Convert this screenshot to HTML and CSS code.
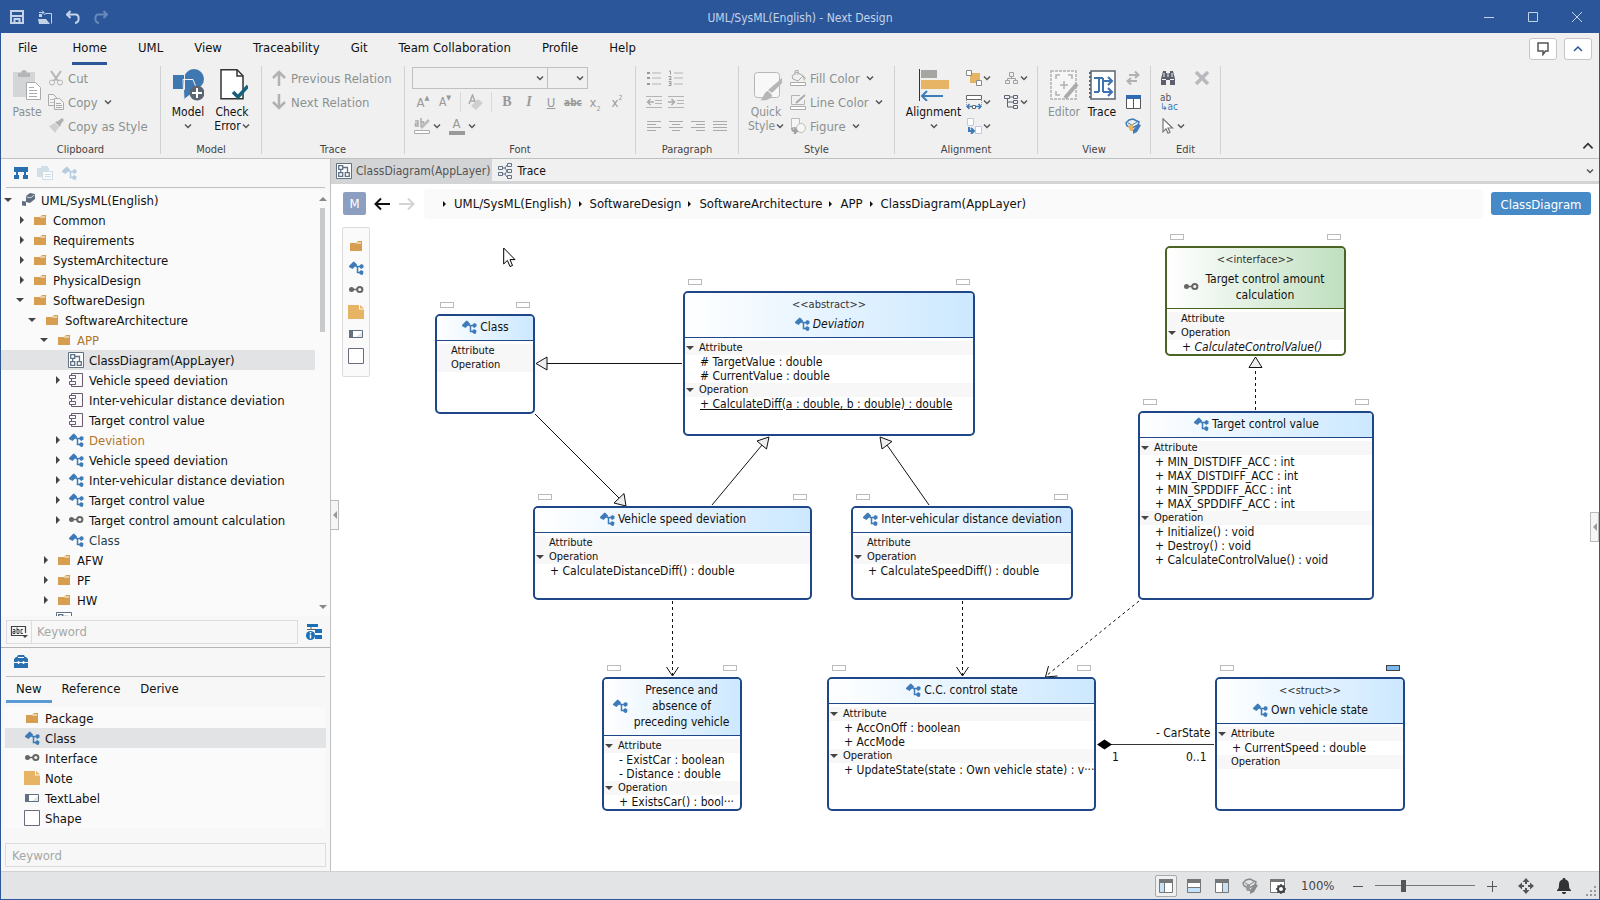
FILE: index.html
```html
<!DOCTYPE html>
<html lang="en">
<head>
    <meta charset="UTF-8">
    <meta name="viewport" content="width=device-width, initial-scale=1.0">
    <title>UML/SysML(English) - Next Design</title>
    <link rel="stylesheet" href="styles.css">
</head>
<body>
    <!-- Shared icons -->
    <svg class="sprite" aria-hidden="true">
        <symbol id="i-folder" viewBox="0 0 16 16"><path fill="#d79e4f" d="M2 5h6l2-2h4v10H2z"/><path fill="#fff" d="M9 4.500h4v1H8z"/></symbol>
        <symbol id="i-class" viewBox="0 0 16 16"><path fill="#3d7cb8" d="M1 6l4-4 1-.5 3 3-.5 2-2 .5-2 2L1 7z"/><path fill="none" stroke="#3d7cb8" stroke-width="1.500" d="M8 6.500h4M9.500 6.500v6h3"/><path fill="#3d7cb8" d="M11 6.500l2-2.500 2.500 1v2.500L13 9zM10.500 12.500L13 10l2.500 1.500-.5 3-2 .5z"/></symbol>
        <symbol id="i-interface" viewBox="0 0 16 16"><circle cx="3.500" cy="7.500" r="2.500" fill="#666"/><path stroke="#666" stroke-width="1.500" d="M4 7.500h5"/><circle cx="11.800" cy="7.500" r="2.600" fill="none" stroke="#666" stroke-width="2"/></symbol>
        <symbol id="i-note" viewBox="0 0 16 16"><path fill="#e7b365" d="M0 1h11v4.500h5V15H0z"/><path fill="#e7b365" d="M12 1l4 3.500h-4z"/></symbol>
        <symbol id="i-label" viewBox="0 0 16 16"><path fill="#fff" stroke="#5f7183" d="M1.500 4.500h13v7h-13z"/><path fill="#5f7183" d="M1 4h4v8H1z"/><path fill="#e4e4e4" d="M14 6v5H8z"/></symbol>
        <symbol id="i-shape" viewBox="0 0 16 16"><path fill="#fff" stroke="#6a6b7c" d="M.5.5h15v15H.5z"/></symbol>
        <symbol id="i-diagram" viewBox="0 0 16 16"><path fill="#fff" stroke="#5f7183" d="M.5.5h15v15H.5z"/><path fill="none" stroke="#5f7183" stroke-width="1.300" d="M2.700 2.700h4v3.600h-4zM2.700 9.700h4v3.600h-4zM9.300 9.700h4v3.600h-4zM7 4.500h4.500v5M4.700 6.500v3"/></symbol>
        <symbol id="i-component" viewBox="0 0 16 16"><path fill="none" stroke="#6a5a70" d="M3.500 4V1.500h11v13h-11V12M3.500 7v2M1.500 3.500h6v3h-6zM1.500 9.500h6v3h-6z"/></symbol>
        <symbol id="i-project" viewBox="0 0 16 16"><path fill="#5f6f80" d="M6 4l4-3 5 1v5l-5 4-4-1z"/><path fill="#fafafa" d="M6.500 4.500l4 1 4-3v.8l-4 3-4-1z"/><path fill="#5f6f80" d="M2 9l4 .5V14l-4-.5z"/></symbol>
        <symbol id="i-down" viewBox="0 0 8 8"><path d="M1 2.500L4 5.500l3-3" fill="none" stroke="currentColor" stroke-width="1.500"/></symbol>
        <symbol id="i-cube" viewBox="0 0 16 16"><path fill="none" stroke="currentColor" stroke-width="1.500" d="M1 5l3-3 4-1 6 3-1 3-6 3-5-2z"/><path fill="none" stroke="currentColor" d="M3 5l4 2 5-3"/><path fill="var(--drop)" d="M3 8l5-2v7H5z"/><path fill="currentColor" d="M8 12l5-6 3 1-4 7-4 2z"/></symbol>
        <symbol id="i-tree" viewBox="0 0 16 16"><path fill="#2a6fb0" d="M1 2h14v5H1z"/><path stroke="#2a6fb0" stroke-width="2" d="M4 7v3M12 7v3"/><path fill="#2a6fb0" d="M1 10h5v4H1zM10 10h5v4h-5z"/></symbol>
    </svg>

    <div class="app">
        <header class="titlebar">
            <div class="quick">
                <button aria-label="Save"><svg viewBox="0 0 14 14"><path fill="none" stroke="currentColor" stroke-width="2" d="M1 1h12v12H1zM1 6h12M4.500 13v-4h5v4"/></svg></button>
                <button aria-label="Open"><svg viewBox="0 0 14 14"><path fill="none" stroke="currentColor" d="M1 2.500h5M4 .5l2 2-2 2M6 4.500l2-1h5.500v10"/><path fill="currentColor" d="M0 9h8l4 5H1zM1 4h3v3H1z"/></svg></button>
                <button aria-label="Undo"><svg viewBox="0 0 14 14"><path fill="none" stroke="currentColor" stroke-width="2" d="M4.500 1L1 4.500 4.500 8M1 4.500h8.500c4 0 4.500 8-.5 8.500"/></svg></button>
                <button aria-label="Redo" class="dim"><svg viewBox="0 0 14 14"><path fill="none" stroke="currentColor" stroke-width="2" d="M9.500 1L13 4.500 9.500 8M13 4.500H4.500c-4 0-4.500 8 .5 8.500"/></svg></button>
            </div>
            <div class="app-title">UML/SysML(English) - Next Design</div>
            <div class="window-buttons">
                <button aria-label="Minimize"><svg viewBox="0 0 12 12"><path stroke="currentColor" d="M1 6.500h10"/></svg></button>
                <button aria-label="Maximize"><svg viewBox="0 0 12 12"><path fill="none" stroke="currentColor" d="M1.500 1.500h9v9h-9z"/></svg></button>
                <button aria-label="Close"><svg viewBox="0 0 12 12"><path stroke="currentColor" d="M1 1l10 10M11 1L1 11"/></svg></button>
            </div>
        </header>

        <nav class="menu">
            <a href="#" class="file">File</a>
            <a href="#" class="active">Home</a>
            <a href="#">UML</a>
            <a href="#">View</a>
            <a href="#">Traceability</a>
            <a href="#">Git</a>
            <a href="#">Team Collaboration</a>
            <a href="#">Profile</a>
            <a href="#">Help</a>
            <div class="menu-right">
                <button aria-label="Feedback"><svg viewBox="0 0 14 14"><path fill="none" stroke="#555" stroke-width="1.500" d="M2 1h10v8H9.500L7 12.500V9H2z"/></svg></button>
                <button aria-label="Collapse"><svg viewBox="0 0 14 14"><path fill="none" stroke="#2b579a" stroke-width="1.500" d="M3 9l4-4 4 4"/></svg></button>
            </div>
        </nav>

        <section class="ribbon">
            <div class="group g-clipboard">
                <div class="group-body">
                    <button class="big off">
                        <svg viewBox="0 0 32 32"><path fill="#d3d5d7" d="M2 3h22v25H2z"/><path fill="#b4b6b8" d="M7 4h3c0-4 6-4 6 0h3v4H7z"/><path fill="#fff" stroke="#a9abad" d="M15.500 13.500h9l5 5v12h-14z"/><path stroke="#a9abad" d="M18 18.500h5M18 21.500h8M18 24.500h8M18 27.500h8"/></svg>
                        <span>Paste</span>
                    </button>
                    <div class="stack">
                        <button class="row off"><svg viewBox="0 0 16 16"><path fill="none" stroke="#b4b4b4" stroke-width="2" d="M3 1l7 10M13 1L6 11"/><circle cx="4" cy="12.500" r="2.500" fill="none" stroke="#b4b4b4"/><circle cx="12" cy="12.500" r="2.500" fill="none" stroke="#b4b4b4"/></svg>Cut</button>
                        <button class="row off"><svg viewBox="0 0 16 16"><path fill="#f5f5f5" stroke="#aaa" d="M.5.5h5l3 3v8h-8z"/><path stroke="#bbb" d="M2 5.500h4M2 8.500h4"/><path fill="#f5f5f5" stroke="#aaa" d="M6.500 4.500h5l4 4v7h-9z"/><path stroke="#aaa" d="M8 9.500h5M8 11.500h6M8 13.500h6"/></svg>Copy<svg class="caret"><use href="#i-down"/></svg></button>
                        <button class="row off"><svg viewBox="0 0 16 16"><path fill="#cfd0d2" d="M1 8l6-3 4 4-4 6z"/><path fill="#b0b1b3" d="M7 4l3-1 4-3 2 2-3 4-1 3z"/></svg>Copy as Style</button>
                    </div>
                </div>
                <div class="group-name">Clipboard</div>
            </div>

            <div class="group g-model">
                <div class="group-body">
                    <button class="big">
                        <svg viewBox="0 0 32 32"><circle cx="22" cy="10" r="10" fill="#3f78b0"/><path fill="#3f78b0" stroke="#f0f0f0" d="M.5 5.500h12v15H.5zM11 10.500h10l4 10-13 10z"/><circle cx="25" cy="24" r="7.500" fill="#5b6573"/><path stroke="#fff" stroke-width="2" d="M20 24h10M25 19v10"/></svg>
                        <span>Model</span>
                        <svg class="caret"><use href="#i-down"/></svg>
                    </button>
                    <button class="big">
                        <svg viewBox="0 0 32 32"><path fill="#fff" stroke="#333" stroke-width="1.500" d="M5 .8h16l6 6v23H5z"/><path fill="none" stroke="#333" stroke-width="1.500" d="M21 1v6h6"/><path fill="none" stroke="#17607a" stroke-width="3.500" d="M17 23l5 5L32 17"/></svg>
                        <span>Check</span>
                        <span>Error<svg class="caret"><use href="#i-down"/></svg></span>
                    </button>
                </div>
                <div class="group-name">Model</div>
            </div>

            <div class="group g-trace">
                <div class="group-body">
                    <div class="stack">
                        <button class="row off"><svg viewBox="0 0 16 16"><path fill="none" stroke="#b0b1b3" stroke-width="2.500" d="M8 16V2M2 8l6-6 6 6"/></svg>Previous Relation</button>
                        <button class="row off"><svg viewBox="0 0 16 16"><path fill="none" stroke="#b0b1b3" stroke-width="2.500" d="M8 0v14M2 8l6 6 6-6"/></svg>Next Relation</button>
                    </div>
                </div>
                <div class="group-name">Trace</div>
            </div>

            <div class="group g-font">
                <div class="group-body column">
                    <div class="combos">
                        <label class="combo wide"><select aria-label="Font family"><option></option></select><svg class="caret"><use href="#i-down"/></svg></label>
                        <label class="combo"><select aria-label="Font size"><option></option></select><svg class="caret"><use href="#i-down"/></svg></label>
                    </div>
                    <div class="tools">
                        <button>A<sup>&#9650;</sup></button>
                        <button class="smaller">A<sup>&#9660;</sup></button>
                        <i class="bar"></i>
                        <button aria-label="Clear format"><svg viewBox="0 0 16 16"><path fill="none" stroke="#aaa" stroke-width="1.500" d="M1 10L4.500 1 8 10M2.500 7h4"/><path fill="#cfcfcf" d="M3 12l7-7 5 4-7 7z"/></svg></button>
                        <i class="bar"></i>
                        <button class="serif"><b>B</b></button>
                        <button class="serif"><em>I</em></button>
                        <button><u>U</u></button>
                        <button class="tiny"><s>abc</s></button>
                        <button>x<sub>2</sub></button>
                        <button>x<sup>2</sup></button>
                    </div>
                    <div class="tools">
                        <button class="drop" aria-label="Highlight"><svg viewBox="0 0 16 16"><path fill="none" stroke="#aaa" stroke-width="1.500" d="M1 3h3v5H1.500V5.500H4M7 0v8h2.500V4H7"/><path stroke="#bbb" stroke-width="2.500" d="M15 2L7 10"/><path fill="#fff" stroke="#aaa" d="M.5 12.500h15v3H.5z"/></svg><svg class="caret"><use href="#i-down"/></svg></button>
                        <button class="drop fontcolor"><span>A</span><svg class="caret"><use href="#i-down"/></svg></button>
                    </div>
                </div>
                <div class="group-name">Font</div>
            </div>

            <div class="group g-paragraph">
                <div class="group-body column">
                    <div class="tools">
                        <button aria-label="Bullets"><svg viewBox="0 0 16 16"><path stroke="#b4b4b4" stroke-width="1.200" d="M6 3h9M6 8h9M6 14h9"/><path stroke="#999" stroke-width="2" d="M1 3h3M1 8h3M1 14h3"/></svg></button>
                        <button aria-label="Numbering"><svg viewBox="0 0 16 16"><path stroke="#b4b4b4" stroke-width="1.200" d="M6 3h9M6 8h9M6 14h9"/><path fill="none" stroke="#999" d="M1 1h1.500v3.500M.5 6.500h2.500v1.500L1 9.500h2.500M.5 11.500h2.500v4H.5M1 13.500h2"/></svg></button>
                    </div>
                    <div class="tools">
                        <button aria-label="Outdent"><svg viewBox="0 0 16 16"><path stroke="#b4b4b4" stroke-width="1.200" d="M0 2.500h16M9 6.500h7M9 9.500h7M0 13.500h16"/><path fill="none" stroke="#aaa" stroke-width="1.500" d="M8 8H2M4.500 5L1.500 8l3 3"/></svg></button>
                        <button aria-label="Indent"><svg viewBox="0 0 16 16"><path stroke="#b4b4b4" stroke-width="1.200" d="M0 2.500h16M9 6.500h7M9 9.500h7M0 13.500h16"/><path fill="none" stroke="#aaa" stroke-width="1.500" d="M0 8h6M3.500 5l3 3-3 3"/></svg></button>
                    </div>
                    <div class="tools">
                        <button aria-label="Align left"><svg viewBox="0 0 16 16"><path stroke="#aaa" d="M1 3.500h14M1 6.500h9M1 9.500h14M1 12.500h9"/></svg></button>
                        <button aria-label="Align center"><svg viewBox="0 0 16 16"><path stroke="#aaa" d="M1 3.500h14M4 6.500h8M1 9.500h14M4 12.500h8"/></svg></button>
                        <button aria-label="Align right"><svg viewBox="0 0 16 16"><path stroke="#aaa" d="M1 3.500h14M6 6.500h9M1 9.500h14M6 12.500h9"/></svg></button>
                        <button aria-label="Justify"><svg viewBox="0 0 16 16"><path stroke="#aaa" d="M1 3.500h14M1 6.500h14M1 9.500h14M1 12.500h14"/></svg></button>
                    </div>
                </div>
                <div class="group-name">Paragraph</div>
            </div>

            <div class="group g-style">
                <div class="group-body">
                    <button class="big off">
                        <svg viewBox="0 0 32 32"><rect x="4.500" y="3.500" width="25" height="25" rx="3" fill="#f8f8f8" stroke="#b4b6b8"/><path fill="#b4b6b8" d="M32 9v5L22 24l-4-3zM10 31c4-1 3-8 8-9l4 4c0 4-6 6-12 5z"/></svg>
                        <span>Quick</span>
                        <span>Style<svg class="caret"><use href="#i-down"/></svg></span>
                    </button>
                    <div class="stack">
                        <button class="row off"><svg viewBox="0 0 16 16"><path fill="none" stroke="#aaa" d="M2 6l5-4 6 4-5 5-5-2zM5 5V1l3-1v5"/><path fill="#bbb" d="M12 4l4 4-2 3z"/><path fill="#fff" stroke="#aaa" d="M.5 12.500h15v3H.5z"/></svg>Fill Color<svg class="caret"><use href="#i-down"/></svg></button>
                        <button class="row off"><svg viewBox="0 0 16 16"><path fill="none" stroke="#b4b4b4" d="M10 1.500H1.500v9h13V6"/><path stroke="#aaa" stroke-width="2" d="M15 1L6 9"/><path fill="#fff" stroke="#aaa" d="M.5 12.500h15v3H.5z"/></svg>Line Color<svg class="caret"><use href="#i-down"/></svg></button>
                        <button class="row off"><svg viewBox="0 0 16 16"><path fill="#f6f6f6" stroke="#bbb" d="M1.500.5h8v9h-8z"/><circle cx="11" cy="10" r="4.500" fill="#f6f6f6" stroke="#bbb"/><path fill="none" stroke="#a0a0a0" stroke-width="2" d="M2 10c0 3 1 3 4 3M4 10l3 3-3 3"/></svg>Figure<svg class="caret"><use href="#i-down"/></svg></button>
                    </div>
                </div>
                <div class="group-name">Style</div>
            </div>

            <div class="group g-alignment">
                <div class="group-body">
                    <button class="big">
                        <svg viewBox="0 0 32 32"><path stroke="#333" d="M1.500 0v32"/><path fill="#a5a5a2" d="M3 1h16v8H3z"/><path fill="#e7b365" d="M3 11h28v9H3z"/><path fill="none" stroke="#3d7cb8" stroke-width="2" d="M25 27H5M9 22l-5 5 5 5"/></svg>
                        <span>Alignment</span>
                        <svg class="caret"><use href="#i-down"/></svg>
                    </button>
                    <div class="stack">
                        <button class="mini" aria-label="Bring to front"><svg viewBox="0 0 16 16"><path fill="#e7b365" d="M4 3h10v10H4z"/><path fill="#fff" stroke="#888" d="M.5.5h5v5h-5zM10.500 10.500h5v5h-5z"/></svg><svg class="caret"><use href="#i-down"/></svg></button>
                        <button class="mini" aria-label="Same width"><svg viewBox="0 0 16 16"><path fill="#fff" stroke="#666" d="M.5 1.500h15v4H.5z"/><path stroke="#999" stroke-dasharray="1 1" d="M.5 6v6M15.500 6v6"/><path fill="none" stroke="#3d7cb8" stroke-width="1.500" d="M6 12.500H1M3.500 10L1 12.500 3.500 15M10 12.500h5M12.500 10l2.500 2.500-2.500 2.500"/><path fill="#fff" stroke="#666" d="M6.500 11.500h3v3h-3z"/></svg><svg class="caret"><use href="#i-down"/></svg></button>
                        <button class="mini" aria-label="Move"><svg viewBox="0 0 16 16"><path fill="#fff" stroke="#bcd" d="M1.500.5h6v7h-6zM9.500 8.500h6v7h-6z"/><path fill="none" stroke="#3d7cb8" stroke-width="2" d="M3 9v4h4M5 10l3 3-3 3"/></svg><svg class="caret"><use href="#i-down"/></svg></button>
                    </div>
                    <div class="stack">
                        <button class="mini" aria-label="Tree layout"><svg viewBox="0 0 16 16"><path fill="none" stroke="#a0a0a0" d="M6.500 2.500h4v4h-4zM2.500 10.500h4v3h-4zM10.500 10.500h4v3h-4zM4.500 10V8.500h8V10M8.500 6.500v2"/></svg><svg class="caret"><use href="#i-down"/></svg></button>
                        <button class="mini" aria-label="List layout"><svg viewBox="0 0 16 16"><path fill="none" stroke="#5b6573" d="M1.500 1.500h5v3h-5zM10.500 1.500h4v3h-4zM10.500 6.500h4v3h-4zM10.500 11.500h4v3h-4zM4.500 5v8h6M4.500 8h6M7 3h3"/></svg><svg class="caret"><use href="#i-down"/></svg></button>
                    </div>
                </div>
                <div class="group-name">Alignment</div>
            </div>

            <div class="group g-view">
                <div class="group-body">
                    <button class="big off">
                        <svg viewBox="0 0 32 32"><path fill="#f6f6f6" stroke="#b0b1b3" stroke-width="1.500" stroke-dasharray="3 1" d="M3 2h25v28H3z"/><path fill="none" stroke="#b0b1b3" stroke-width="1.500" d="M8 10V6h4M20 6h4v4M8 22v4h4M16 12v8M12 16h8"/><path stroke="#a9abad" stroke-width="4" d="M29 15L17 29"/></svg>
                        <span>Editor</span>
                    </button>
                    <button class="big">
                        <svg viewBox="0 0 32 32"><path fill="#fff" stroke="#5b6573" stroke-width="1.500" d="M5 2h24v28H5z"/><path stroke="#5b6573" stroke-width="2" stroke-dasharray="2 2" d="M4 3v26"/><path fill="none" stroke="#3d73b0" stroke-width="2" d="M8 9h5v14M8 23h5M17 23V12h8M17 9v3M17 23h8M13 9h4M22 8l4 4-4 4M22 19l4 4-4 4"/></svg>
                        <span>Trace</span>
                    </button>
                    <div class="stack">
                        <button class="mini" aria-label="Swap"><svg viewBox="0 0 16 16"><path fill="none" stroke="#b0b1b3" stroke-width="2" d="M4 5h9M10 1.500L13.500 5 10 8M12 11H3M6 8l-3.500 3L6 14.500"/></svg></button>
                        <button class="mini" aria-label="Split"><svg viewBox="0 0 16 16"><path fill="#fff" stroke="#555" d="M1.500 2.500h14v12h-14zM8.500 3v11"/><path fill="#2f6cb3" d="M1 1h15v4H1z"/></svg></button>
                        <button class="mini cube" aria-label="Model view"><svg><use href="#i-cube"/></svg></button>
                    </div>
                </div>
                <div class="group-name">View</div>
            </div>

            <div class="group g-edit">
                <div class="group-body">
                    <div class="stack">
                        <button class="mini" aria-label="Find"><svg viewBox="0 0 16 16"><path fill="#5b5f6e" d="M3 1h3v2h4V1h3l2 8v6h-5v-5H6v5H1V9z"/><path stroke="#f0f0f0" d="M2 9.500h4M10 9.500h4M8 3v4M4 3v4M12 3v4"/></svg></button>
                        <button class="mini replace">ab<span>&#8627;ac</span></button>
                        <button class="mini" aria-label="Select"><svg viewBox="0 0 16 16"><path fill="#fff" stroke="#777" stroke-width="1.200" d="M3 .8v13l3-3 2 4.500 2-1-2-4.300h4.500z"/></svg><svg class="caret"><use href="#i-down"/></svg></button>
                    </div>
                    <div class="stack">
                        <button class="mini" aria-label="Delete"><svg viewBox="0 0 16 16"><path stroke="#b8b9bc" stroke-width="3.500" d="M2 2l12 12M14 2L2 14"/></svg></button>
                    </div>
                </div>
                <div class="group-name">Edit</div>
            </div>
            <button class="ribbon-fold" aria-label="Fold ribbon"><svg viewBox="0 0 14 14"><path fill="none" stroke="#333" stroke-width="1.500" d="M3 9l4-4 4 4"/></svg></button>
        </section>

        <main>
            <aside>
                <div class="pane-icons">
                    <svg><use href="#i-tree"/></svg>
                    <svg class="faint" viewBox="0 0 16 16"><path fill="#8fb0c8" d="M0 3h4V1h7v2h1v3H7v6H0z"/><path fill="#fff" stroke="#8fb0c8" d="M5.500 6.500h10v8h-10z"/><path stroke="#8fb0c8" d="M8 9.500h6M8 11.500h6"/></svg>
                    <svg class="faint"><use href="#i-class"/></svg>
                </div>
                <div class="tree-wrap">
                    <ul class="tree">
                        <li class="open"><svg><use href="#i-project"/></svg>UML/SysML(English)</li>
                        <li class="l1 closed"><svg><use href="#i-folder"/></svg>Common</li>
                        <li class="l1 closed"><svg><use href="#i-folder"/></svg>Requirements</li>
                        <li class="l1 closed"><svg><use href="#i-folder"/></svg>SystemArchitecture</li>
                        <li class="l1 closed"><svg><use href="#i-folder"/></svg>PhysicalDesign</li>
                        <li class="l1 open"><svg><use href="#i-folder"/></svg>SoftwareDesign</li>
                        <li class="l2 open"><svg><use href="#i-folder"/></svg>SoftwareArchitecture</li>
                        <li class="l3 open changed"><svg><use href="#i-folder"/></svg>APP</li>
                        <li class="l4 selected"><svg><use href="#i-diagram"/></svg>ClassDiagram(AppLayer)</li>
                        <li class="l4 closed"><svg><use href="#i-component"/></svg>Vehicle speed deviation</li>
                        <li class="l4"><svg><use href="#i-component"/></svg>Inter-vehicular distance deviation</li>
                        <li class="l4"><svg><use href="#i-component"/></svg>Target control value</li>
                        <li class="l4 closed changed"><svg><use href="#i-class"/></svg>Deviation</li>
                        <li class="l4 closed"><svg><use href="#i-class"/></svg>Vehicle speed deviation</li>
                        <li class="l4 closed"><svg><use href="#i-class"/></svg>Inter-vehicular distance deviation</li>
                        <li class="l4 closed"><svg><use href="#i-class"/></svg>Target control value</li>
                        <li class="l4 closed"><svg><use href="#i-interface"/></svg>Target control amount calculation</li>
                        <li class="l4 added"><svg><use href="#i-class"/></svg>Class</li>
                        <li class="l3 closed"><svg><use href="#i-folder"/></svg>AFW</li>
                        <li class="l3 closed"><svg><use href="#i-folder"/></svg>PF</li>
                        <li class="l3 closed"><svg><use href="#i-folder"/></svg>HW</li>
                        <li class="l3"><svg><use href="#i-diagram"/></svg></li>
                    </ul>
                    <div class="scrollbar"><i class="up"></i><i class="thumb"></i><i class="down"></i></div>
                </div>
                <div class="search">
                    <div class="search-box">
                        <button aria-label="Match case"><svg viewBox="0 0 18 14"><path fill="none" stroke="#444" stroke-width="1.200" d="M14 10.500H1.500v-9h14V8"/><path fill="none" stroke="#444" d="M3 4.500h2v4H3v-2h2M7 2.500v6h2v-4H7M13 4.500h-2v4h2"/><path fill="#444" d="M12 10h6l-3 3z"/></svg></button>
                        <input type="text" placeholder="Keyword" aria-label="Search the model">
                    </div>
                    <svg viewBox="0 0 16 16"><path fill="#1a6fb8" d="M1 0h11v3H1zM9 5h7v4H9zM9 11h7v4H9z"/><path stroke="#666" d="M5 3v3M1 5.500h8"/><circle cx="4.500" cy="11.500" r="4.500" fill="#1a6fb8"/><path stroke="#fff" stroke-width="1.500" d="M4.500 10.500v4M4.500 8v1.500"/></svg>
                </div>

                <div class="toolbox">
                    <div class="pane-icons"><svg viewBox="0 0 16 16"><path fill="#2a6fb0" d="M1 5l2-2h1l1-2h6l1 2h1l2 2v3H1zM1 9h14v5H1z"/><path stroke="#f7f7f7" d="M1 8.500h14M5 3.500h6"/><path stroke="#f7f7f7" stroke-width="1.500" d="M5.500 7v3M10.500 7v3"/></svg></div>
                    <div class="tabs">
                        <a href="#" class="active">New</a>
                        <a href="#">Reference</a>
                        <a href="#">Derive</a>
                    </div>
                    <ul class="items">
                        <li><svg><use href="#i-folder"/></svg>Package</li>
                        <li class="selected"><svg><use href="#i-class"/></svg>Class</li>
                        <li><svg><use href="#i-interface"/></svg>Interface</li>
                        <li><svg><use href="#i-note"/></svg>Note</li>
                        <li><svg><use href="#i-label"/></svg>TextLabel</li>
                        <li><svg><use href="#i-shape"/></svg>Shape</li>
                    </ul>
                    <input type="text" placeholder="Keyword" aria-label="Search the toolbox">
                </div>
            </aside>

            <section class="document">
                <div class="doc-tabs">
                    <a href="#" class="active"><svg><use href="#i-diagram"/></svg>ClassDiagram(AppLayer)</a>
                    <a href="#"><svg viewBox="0 0 16 16"><path fill="none" stroke="#5f7183" d="M1.500 3.500h4v3h-4zM1.500 9.500h4v3h-4zM10.500.5h4v3h-4zM10.500 6.500h4v3h-4zM10.500 12.500h4v3h-4zM6 5h2l2-3M8 5l2 3M6 11h2l2-3M8 11l2 3"/></svg>Trace</a>
                    <svg class="caret"><use href="#i-down"/></svg>
                </div>
                <div class="path">
                    <button class="mode">M</button>
                    <button class="nav" aria-label="Back"><svg viewBox="0 0 16 16"><path fill="none" stroke="#111" stroke-width="2" d="M16 8H2M7 2.500L1.500 8 7 13.500"/></svg></button>
                    <button class="nav" aria-label="Forward"><svg viewBox="0 0 16 16"><path fill="none" stroke="#d4d4d4" stroke-width="2" d="M0 8h14M9 2.500L14.500 8 9 13.500"/></svg></button>
                    <nav class="crumbs">
                        <a href="#">UML/SysML(English)</a>
                        <a href="#">SoftwareDesign</a>
                        <a href="#">SoftwareArchitecture</a>
                        <a href="#">APP</a>
                        <a href="#">ClassDiagram(AppLayer)</a>
                    </nav>
                    <button class="kind">ClassDiagram</button>
                </div>

                <div class="canvas">
                    <div class="palette">
                        <svg><use href="#i-folder"/></svg>
                        <svg><use href="#i-class"/></svg>
                        <svg><use href="#i-interface"/></svg>
                        <svg><use href="#i-note"/></svg>
                        <svg><use href="#i-label"/></svg>
                        <svg><use href="#i-shape"/></svg>
                    </div>

                    <svg class="links" viewBox="331 219 1267 652">
                        <g fill="none" stroke="#111">
                            <path d="M682 363.500H547M535 414l84 84M712 505l50-60M929 505l-42-60"/>
                            <path stroke="#333" d="M1111 744.500h103"/>
                            <g stroke-dasharray="3 3">
                                <path d="M1255.500 410v-42M672.500 601v74M962.500 601v74M1139 601l-93 75"/>
                            </g>
                            <path d="M666.500 667l6 9 6-9M956.500 667l6 9 6-9M1048.500 666l-3 11 12-1"/>
                        </g>
                        <g fill="#eee" stroke="#111">
                            <path d="M536 363.500l11-6.500v13zM626 506l-12-3 10-9.500zM769 437l-12 4 9.500 8zM880 437l2 12 10-7.500zM1255.500 357l-6.500 10.500h13z"/>
                        </g>
                        <path fill="#000" d="M1097 744.500l7.500-5 7.500 5-7.500 5z"/>
                        <g class="link-text">
                            <text x="1156" y="737">- CarState</text>
                            <text x="1112" y="761">1</text>
                            <text x="1186" y="761">0..1</text>
                        </g>
                    </svg>

                    <article class="node n-class">
                        <header><h3><svg><use href="#i-class"/></svg><span>Class</span></h3></header>
                        <h4>Attribute</h4>
                        <h4>Operation</h4>
                    </article>
                    <article class="node n-deviation">
                        <header><p>&lt;&lt;abstract&gt;&gt;</p><h3><svg><use href="#i-class"/></svg><span><em>Deviation</em></span></h3></header>
                        <h4 class="open">Attribute</h4>
                        <p># TargetValue : double</p>
                        <p># CurrentValue : double</p>
                        <h4 class="open">Operation</h4>
                        <p><u>+ CalculateDiff(a : double, b : double) : double</u></p>
                    </article>
                    <article class="node green n-amount">
                        <header><p>&lt;&lt;interface&gt;&gt;</p><h3><svg><use href="#i-interface"/></svg><span>Target control amount calculation</span></h3></header>
                        <h4>Attribute</h4>
                        <h4 class="open">Operation</h4>
                        <p>+ <em>CalculateControlValue()</em></p>
                    </article>
                    <article class="node n-target">
                        <header><h3><svg><use href="#i-class"/></svg><span>Target control value</span></h3></header>
                        <h4 class="open">Attribute</h4>
                        <p>+ MIN_DISTDIFF_ACC : int</p>
                        <p>+ MAX_DISTDIFF_ACC : int</p>
                        <p>+ MIN_SPDDIFF_ACC : int</p>
                        <p>+ MAX_SPDDIFF_ACC : int</p>
                        <h4 class="open">Operation</h4>
                        <p>+ Initialize() : void</p>
                        <p>+ Destroy() : void</p>
                        <p>+ CalculateControlValue() : void</p>
                    </article>
                    <article class="node n-speed">
                        <header><h3><svg><use href="#i-class"/></svg><span>Vehicle speed deviation</span></h3></header>
                        <h4>Attribute</h4>
                        <h4 class="open">Operation</h4>
                        <p>+ CalculateDistanceDiff() : double</p>
                    </article>
                    <article class="node n-distance">
                        <header><h3><svg><use href="#i-class"/></svg><span>Inter-vehicular distance deviation</span></h3></header>
                        <h4>Attribute</h4>
                        <h4 class="open">Operation</h4>
                        <p>+ CalculateSpeedDiff() : double</p>
                    </article>
                    <article class="node n-presence">
                        <header><h3><svg><use href="#i-class"/></svg><span>Presence and absence of preceding vehicle</span></h3></header>
                        <h4 class="open">Attribute</h4>
                        <p>- ExistCar : boolean</p>
                        <p>- Distance : double</p>
                        <h4 class="open">Operation</h4>
                        <p>+ ExistsCar() : bool&#183;&#183;&#183;</p>
                    </article>
                    <article class="node n-control">
                        <header><h3><svg><use href="#i-class"/></svg><span>C.C. control state</span></h3></header>
                        <h4 class="open">Attribute</h4>
                        <p>+ AccOnOff : boolean</p>
                        <p>+ AccMode</p>
                        <h4 class="open">Operation</h4>
                        <p>+ UpdateState(state : Own vehicle state) : v&#183;&#183;&#183;</p>
                    </article>
                    <article class="node n-own">
                        <header><p>&lt;&lt;struct&gt;&gt;</p><h3><svg><use href="#i-class"/></svg><span>Own vehicle state</span></h3></header>
                        <h4 class="open">Attribute</h4>
                        <p>+ CurrentSpeed : double</p>
                        <h4>Operation</h4>
                    </article>

                    <svg class="cursor" viewBox="0 0 14 21"><path fill="#fff" stroke="#000" d="M.7 1v16l3.700-3.600L7 19.500l2.500-1L7 12.600h5z"/></svg>
                    <button class="flap left" aria-label="Hide model pane"></button>
                    <button class="flap right" aria-label="Show inspector"></button>
                </div>
            </section>
        </main>

        <footer class="status">
            <button class="on" aria-label="Left pane"><svg viewBox="0 0 16 16"><path fill="#fff" stroke="#777" d="M1.500 2.500h13v12h-13z"/><path fill="#c6e2f8" d="M2 5h4v9H2z"/><path fill="#777" d="M1 1h14v4H1zM6 5h1v9H6z"/></svg></button>
            <button aria-label="Bottom pane"><svg viewBox="0 0 16 16"><path fill="#fff" stroke="#777" d="M1.500 2.500h13v12h-13z"/><path fill="#c6e2f8" d="M2 10h12v4H2z"/><path fill="#777" d="M1 1h14v4H1zM2 9h12v1H2z"/></svg></button>
            <button aria-label="Right pane"><svg viewBox="0 0 16 16"><path fill="#fff" stroke="#777" d="M1.500 2.500h13v12h-13z"/><path fill="#c6e2f8" d="M9 5h5v9H9z"/><path fill="#777" d="M1 1h14v4H1zM8 5h1v9H8z"/></svg></button>
            <button class="gray" aria-label="Model view"><svg><use href="#i-cube"/></svg></button>
            <button aria-label="View settings"><svg viewBox="0 0 16 16"><path fill="#fff" stroke="#777" d="M.5 2.500h14v12H.5z"/><path fill="#777" d="M0 1h15v3H0z"/><circle cx="11" cy="11" r="3" fill="#fff" stroke="#444" stroke-width="2"/><path stroke="#444" stroke-width="1.500" d="M11 6v2M11 14v2M6 11h2M14 11h2M7.500 7.500l1.500 1.500M13 13l1.500 1.500M14.500 7.500L13 9M9 13l-1.500 1.500"/></svg></button>
            <span class="percent">100%</span>
            <button aria-label="Zoom out"><svg viewBox="0 0 16 16"><path stroke="#555" d="M3 8.500h10"/></svg></button>
            <input type="range" min="0" max="100" value="27" aria-label="Zoom">
            <button aria-label="Zoom in"><svg viewBox="0 0 16 16"><path stroke="#555" d="M3 8.500h10M8.500 3v11"/></svg></button>
            <button class="fit" aria-label="Fit"><svg viewBox="0 0 16 16"><path fill="#555" d="M8 0l3.500 4h-7zM8 16l3.500-4h-7zM0 8l4-3.500v7zM16 8l-4-3.500v7z"/><path stroke="#555" stroke-width="2" d="M8 3v3M8 10v3M3 8h3M10 8h3"/></svg></button>
            <button class="bell" aria-label="Notifications"><svg viewBox="0 0 16 16"><path fill="#333" d="M8 0c1 0 1.500.5 1.500 1.500C12 2.500 13 4 13 7c0 3 .5 4 2 5v1H1v-1c1.500-1 2-2 2-5 0-3 1-4.500 3.500-5.500C6.500.5 7 0 8 0zM6 14h4c0 3-4 3-4 0z"/></svg></button>
            <svg class="grip" viewBox="0 0 10 10"><path stroke="#999" stroke-width="2" stroke-dasharray="2 2" d="M8 1h2M4 5h6M0 9h10"/></svg>
        </footer>
    </div>
</body>
</html>
```

FILE: styles.css
```css
*, *::before, *::after {
    box-sizing: border-box;
}
body {
    margin: 0;
    font-family: "DejaVu Sans Condensed", "DejaVu Sans", "Noto Sans", sans-serif;
    font-size: 13px;
    color: #111;
}
a {
    color: inherit;
    text-decoration: none;
}
button, input, select {
    font: inherit;
    color: inherit;
    margin: 0;
    padding: 0;
    border: none;
    background: none;
}
ul, h3, h4, p {
    margin: 0;
    padding: 0;
    list-style: none;
    font-size: inherit;
    font-weight: normal;
}
svg {
    width: 16px;
    height: 16px;
    flex: none;
    display: block;
}
.sprite {
    position: absolute;
    width: 0;
    height: 0;
}
.caret {
    width: 8px;
    height: 8px;
    color: #555;
}
.app {
    display: flex;
    flex-direction: column;
    height: 100vh;
    border: 1px solid #2b579a;
    border-top: none;
    background: #f0f0f0;
}

/* Title bar */
.titlebar {
    display: grid;
    grid-template-columns: 1fr auto 1fr;
    align-items: center;
    height: 33px;
    flex: none;
    background: #2b579a;
    color: #c5d3e8;
}
.quick {
    display: flex;
    gap: 14px;
    padding-left: 9px;
}
.quick svg {
    width: 14px;
    height: 14px;
}
.quick .dim {
    opacity: 0.4;
}
.app-title {
    font-size: 12px;
    padding-top: 2px;
}
.window-buttons {
    display: flex;
    justify-content: flex-end;
    gap: 32px;
    padding-right: 16px;
}
.window-buttons svg {
    width: 12px;
    height: 12px;
}

/* Menu */
.menu {
    display: flex;
    align-items: center;
    gap: 31px;
    height: 33px;
    flex: none;
    padding: 0 7px 0 17px;
}
.menu a {
    padding: 6px 0 7px;
    line-height: 14px;
    border-bottom: 3px solid transparent;
}
.menu .file {
    margin-right: 4px;
}
.menu .active {
    border-color: #2b579a;
}
.menu-right {
    display: flex;
    gap: 7px;
    margin-left: auto;
}
.menu-right button {
    display: grid;
    place-items: center;
    width: 28px;
    height: 22px;
    margin-bottom: 2px;
    border: 1px solid #c6c6c6;
    border-radius: 3px;
    background: #fff;
}
.menu-right svg {
    width: 14px;
    height: 14px;
}

/* Ribbon */
.ribbon {
    display: flex;
    height: 93px;
    flex: none;
    padding-bottom: 4px;
    border-bottom: 1px solid #bfc0c1;
}
.group {
    display: flex;
    flex-direction: column;
    border-right: 1px solid #d0d1d2;
}
.group-body {
    display: flex;
    flex: 1;
    padding-left: 7px;
}
.group-body.column {
    flex-direction: column;
}
.group-name {
    font-size: 11px;
    line-height: 8px;
    text-align: center;
    color: #444;
}
.g-clipboard {
    width: 160px;
}
.g-model {
    width: 101px;
}
.g-trace {
    width: 143px;
}
.g-font {
    width: 231px;
}
.g-paragraph {
    width: 103px;
}
.g-style {
    width: 156px;
}
.g-alignment {
    width: 143px;
}
.g-view {
    width: 113px;
}
.g-edit {
    width: 70px;
}
.g-clipboard .group-body, .g-trace .group-body, .g-alignment .group-body, .g-edit .group-body {
    padding-left: 9px;
}
.g-model .group-body {
    padding-left: 5px;
}
.big {
    display: flex;
    flex-direction: column;
    align-items: center;
    align-self: flex-start;
    padding-top: 3px;
    font-size: 12px;
    line-height: 14px;
}
.big > svg:first-child {
    width: 32px;
    height: 32px;
    margin-bottom: 4px;
}
.big span {
    display: flex;
    align-items: center;
    gap: 1px;
    white-space: nowrap;
}
.big > .caret {
    margin-top: 3px;
}
.g-clipboard .big {
    width: 34px;
}
.g-model .big {
    width: 44px;
}
.g-style .big {
    width: 40px;
}
.g-alignment .big {
    width: 60px;
}
.g-view .big {
    width: 38px;
}
.off {
    color: #8b9090;
}
.stack {
    display: flex;
    flex-direction: column;
    align-items: flex-start;
    margin-left: 4px;
}
.row {
    display: flex;
    align-items: center;
    gap: 4px;
    height: 24px;
    white-space: nowrap;
}
.row .caret {
    margin-left: 2px;
}
.g-trace .stack, .g-edit .stack {
    margin-left: 0;
}
.g-alignment .stack {
    margin-left: 3px;
}
.mini {
    display: flex;
    align-items: center;
    gap: 1px;
    width: 34px;
    height: 24px;
}
.cube {
    color: #3d7cb8;
    --drop: #e7b365;
}
.g-view .mini {
    width: 16px;
}
.replace {
    display: block;
    font-size: 10px;
    line-height: 9px;
    text-align: left;
    color: #555;
}
.replace span {
    display: block;
    color: #3d7cb8;
}
.combos {
    display: flex;
    padding-top: 1px;
    height: 24px;
}
.combo {
    position: relative;
    width: 41px;
    height: 22px;
}
.combo.wide {
    width: 136px;
    margin-right: -1px;
}
.combo select {
    appearance: none;
    width: 100%;
    height: 22px;
    border: 1px solid #bfc0c1;
}
.combo .caret {
    position: absolute;
    right: 4px;
    top: 7px;
}
.tools {
    display: flex;
    align-items: center;
    height: 24px;
    color: #999;
}
.tools button {
    display: flex;
    align-items: center;
    justify-content: center;
    width: 22px;
    height: 22px;
    font-size: 13px;
}
.tools sup, .tools sub {
    font-size: 7px;
    line-height: 8px;
    align-self: flex-start;
    margin-top: 3px;
}
.tools sub {
    align-self: flex-end;
}
.tools .smaller {
    font-size: 12px;
}
.tools .tiny {
    font-size: 10px;
    font-weight: bold;
}
.tools .serif {
    font-family: "Liberation Serif", serif;
    font-size: 14px;
    font-weight: bold;
}
.tools .bar {
    width: 1px;
    height: 20px;
    margin: 0 4px;
    background: #d8d8d8;
}
.tools .drop {
    width: 30px;
    margin-right: 5px;
    gap: 3px;
}
.fontcolor span {
    width: 16px;
    line-height: 14px;
    border-bottom: 4px solid #999;
}
.ribbon-fold {
    align-self: flex-end;
    margin-left: auto;
    margin-right: 3px;
}

/* Left pane */
main {
    display: flex;
    flex: 1;
    min-height: 0;
}
aside {
    display: flex;
    flex-direction: column;
    width: 330px;
    flex: none;
    border-right: 1px solid #bfc0c1;
    background: #f7f7f7;
}
.pane-icons {
    display: flex;
    align-items: center;
    gap: 8px;
    height: 29px;
    flex: none;
    margin: 0 5px;
    padding-left: 7px;
    border-bottom: 1px solid #bfc0c1;
}
.faint {
    opacity: 0.35;
}
.tree-wrap {
    display: flex;
    flex: 1;
    min-height: 0;
    margin-top: 2px;
    background: #fafafa;
}
.tree {
    flex: 1;
    overflow: hidden;
}
.tree li {
    display: flex;
    align-items: center;
    height: 20px;
    white-space: nowrap;
}
.tree li::before {
    content: "";
    width: 8px;
    margin: 0 8px 0 3px;
    flex: none;
}
.tree .open::before, .node .open::before {
    border: 4px solid transparent;
    border-top-color: #444;
    border-bottom: none;
}
.tree .closed::before {
    width: 4px;
    margin-left: 7px;
    border: 4px solid transparent;
    border-left-color: #444;
    border-right: none;
}
.tree svg {
    margin-right: 5px;
}
.tree .l1 {
    padding-left: 12px;
}
.tree .l2 {
    padding-left: 24px;
}
.tree .l3 {
    padding-left: 36px;
}
.tree .l4 {
    padding-left: 48px;
}
.selected {
    background: #e2e3e5;
}
.changed {
    color: #b0762b;
}
.added {
    color: #1f3f4a;
}
.scrollbar {
    display: flex;
    flex-direction: column;
    align-items: center;
    width: 15px;
    padding: 7px 0;
}
.scrollbar .up, .scrollbar .down {
    border: 4px solid transparent;
    border-bottom-color: #888;
    border-top: none;
}
.scrollbar .down {
    border-top: 4px solid #888;
    border-bottom: none;
    margin-top: auto;
}
.scrollbar .thumb {
    width: 5px;
    height: 124px;
    margin-top: 7px;
    background: #c8c9cb;
}
.search {
    display: flex;
    align-items: center;
    gap: 8px;
    height: 31px;
    flex: none;
    padding: 0 8px 0 5px;
}
.search-box {
    display: flex;
    flex: 1;
    height: 24px;
    border: 1px solid #dcdcdc;
}
.search-box button {
    padding: 0 3px;
    border-right: 1px solid #dcdcdc;
}
.search-box button svg {
    width: 18px;
    height: 14px;
}
.search-box input {
    flex: 1;
    padding-left: 5px;
}
input::placeholder {
    color: #a5a7a5;
}
.toolbox {
    border-top: 1px solid #b5b6b7;
}
.toolbox > input {
    display: block;
    width: 321px;
    height: 24px;
    margin: 15px 4px 4px;
    padding-left: 6px;
    border: 1px solid #dcdcdc;
}
.tabs {
    display: flex;
    padding-left: 5px;
    height: 30px;
}
.tabs a {
    height: 26px;
    padding: 0 10px;
    line-height: 24px;
}
.tabs .active {
    border-bottom: 3px solid #5b9bd5;
}
.items {
    margin: 0 4px;
    padding-top: 1px;
    background: #fafafa;
}
.items li {
    display: flex;
    align-items: center;
    gap: 5px;
    height: 20px;
    padding-left: 19px;
}

/* Document */
.document {
    display: flex;
    flex-direction: column;
    flex: 1;
    min-width: 0;
    background: #fff;
}
.doc-tabs {
    display: flex;
    height: 25px;
    flex: none;
    border-bottom: 3px solid #d3d4d5;
    background: #f0f0f0;
}
.doc-tabs a {
    display: flex;
    align-items: center;
    gap: 4px;
    padding: 0 2px 0 5px;
    height: 24px;
    font-size: 12px;
}
.doc-tabs .active {
    background: #d3d4d5;
    color: #555;
}
.doc-tabs > .caret {
    margin: 8px 5px 0 auto;
}
.path {
    display: flex;
    align-items: center;
    height: 39px;
    flex: none;
    padding: 0 8px 0 12px;
}
.mode {
    width: 23px;
    height: 23px;
    margin-right: 8px;
    border-radius: 2px;
    background: #8c9fc1;
    color: #fff;
}
.nav {
    margin-right: 9px;
}
.crumbs {
    display: flex;
    align-items: center;
    flex: 1;
    height: 30px;
    margin-right: 8px;
    padding-left: 12px;
    border-radius: 4px;
    background: #fafafa;
}
.crumbs a {
    display: flex;
    align-items: center;
}
.crumbs a::before {
    content: "";
    margin: 0 8px 0 7px;
    border: 3px solid transparent;
    border-left-color: #111;
    border-right: none;
}
.kind {
    width: 100px;
    height: 23px;
    padding-top: 1px;
    border-radius: 3px;
    background: #468ac8;
    color: #fff;
}

/* Diagram */
.canvas {
    position: relative;
    flex: 1;
    overflow: hidden;
}
.links {
    position: absolute;
    left: 0;
    top: -4px;
    width: 1267px;
    height: 652px;
}
.link-text {
    font-size: 12px;
    fill: #111;
}
.palette {
    position: absolute;
    left: 11px;
    top: 4px;
    display: flex;
    flex-direction: column;
    align-items: center;
    gap: 6px;
    width: 28px;
    height: 150px;
    padding-top: 10px;
    border: 1px solid #dcdcdc;
    border-radius: 2px;
    background: #fafafa;
}
.node {
    position: absolute;
    border: 2px solid #1f4788;
    border-radius: 5px;
    background: #fff;
    font-size: 12px;
    line-height: 14px;
}
/* connection grips over the two upper corners */
.node::before, .node::after {
    content: "";
    position: absolute;
    top: -14px;
    width: 14px;
    height: 6px;
    border: 1px solid #bbb;
    background: #fff;
}
.node::before {
    left: 3px;
}
.node::after {
    right: 3px;
}
.node header {
    margin-bottom: 3px;
    padding: 3px 4px 5px;
    border-bottom: 1px solid #1f4788;
    border-radius: 3px 3px 0 0;
    background: linear-gradient(to right, #fff, #cce8ff);
    text-align: center;
}
.node header p {
    padding: 0;
    font-size: 11px;
    line-height: 18px;
    margin-bottom: 2px;
    color: #333;
}
.node h3 {
    display: flex;
    align-items: center;
    justify-content: center;
    gap: 3px;
    line-height: 16px;
}
.node h4 {
    display: flex;
    align-items: center;
    font-size: 11px;
    background: #f7f7f7;
}
.node h4::before {
    content: "";
    width: 8px;
    margin: 0 5px 0 1px;
}
.node p {
    padding-left: 15px;
    white-space: nowrap;
}
.green {
    border-color: #4b6423;
}
.green header {
    border-color: #4b6423;
    background: linear-gradient(to right, #fff, #bfdfbf);
}
.n-class {
    left: 104px;
    top: 91px;
    width: 100px;
    height: 100px;
}
.n-deviation {
    left: 352px;
    top: 68px;
    width: 292px;
    height: 145px;
}
.n-amount {
    left: 834px;
    top: 23px;
    width: 181px;
    height: 110px;
}
.n-amount h3 {
    padding: 0 12px;
}
.n-target {
    left: 807px;
    top: 188px;
    width: 236px;
    height: 189px;
}
.n-speed {
    left: 202px;
    top: 283px;
    width: 279px;
    height: 94px;
}
.n-distance {
    left: 520px;
    top: 283px;
    width: 222px;
    height: 94px;
}
.n-presence {
    left: 271px;
    top: 454px;
    width: 140px;
    height: 134px;
}
.n-presence h3 {
    padding: 0 4px;
}
.n-control {
    left: 496px;
    top: 454px;
    width: 269px;
    height: 134px;
}
.n-own {
    left: 884px;
    top: 454px;
    width: 190px;
    height: 134px;
}
.n-own::after {
    border-color: #444;
    background: #7ab8ee;
}
.cursor {
    position: absolute;
    left: 172px;
    top: 24px;
    width: 14px;
    height: 21px;
}
.flap {
    position: absolute;
    display: grid;
    place-items: center;
    width: 9px;
    height: 30px;
    border: 1px solid #bbb;
    background: #f4f5f7;
}
.flap::before {
    content: "";
    border: 4px solid transparent;
    border-right-color: #999;
    border-left: none;
}
.flap.left {
    left: -1px;
    top: 277px;
}
.flap.right {
    right: 0;
    top: 289px;
}

/* Status bar */
.status {
    display: flex;
    align-items: center;
    justify-content: flex-end;
    gap: 6px;
    height: 28px;
    flex: none;
    padding-right: 3px;
    border-top: 1px solid #d0d1d2;
    background: #e3e4e6;
}
.status button {
    display: grid;
    place-items: center;
    width: 22px;
    height: 22px;
    border: 1px solid transparent;
    border-radius: 2px;
}
.status .on {
    border-color: #aaa;
    background: #f0f0f0;
}
.gray {
    color: #8a8a8a;
    --drop: #999;
}
.percent {
    width: 46px;
    padding-left: 6px;
    color: #444;
}
.status input {
    appearance: none;
    width: 100px;
    height: 1px;
    background: #777;
}
.status input::-webkit-slider-thumb {
    appearance: none;
    width: 5px;
    height: 12px;
    background: #555;
}
.status .fit {
    margin-left: 6px;
}
.status .bell {
    margin: 0 5px 0 10px;
}
.grip {
    width: 10px;
    height: 10px;
    align-self: flex-end;
    margin-bottom: 3px;
}
```
